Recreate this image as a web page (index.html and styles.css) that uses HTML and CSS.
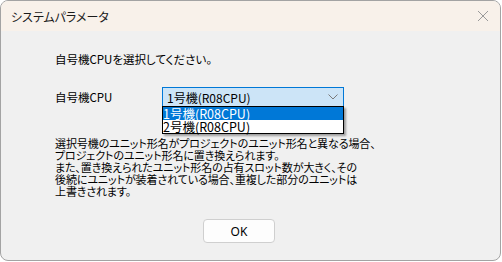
FILE: index.html
```html
<!DOCTYPE html>
<html lang="ja">
<head>
<meta charset="utf-8">
<link rel="stylesheet" href="styles.css">
</head>
<body>
<div class="dialog">
  <div class="titlebar">
    <span class="title">システムパラメータ</span>
    <svg class="close" width="12" height="12" viewBox="0 0 12 12"><path d="M1 1L11 11M11 1L1 11" stroke="#9a9a9a" stroke-width="1" fill="none"/></svg>
  </div>
  <div class="content">
    <p class="lead">自号機CPUを選択してください。</p>
    <div class="row">
      <span class="label">自号機CPU</span>
      <div class="combo-wrap">
        <div class="combo">
          <span>1号機(R08CPU)</span>
          <svg class="chev" width="10" height="6" viewBox="0 0 10 6"><path d="M0.5 0.5L5 5L9.5 0.5" stroke="#7a7a7a" stroke-width="1" fill="none"/></svg>
        </div>
        <ul class="list">
          <li class="sel">1号機(R08CPU)</li>
          <li>2号機(R08CPU)</li>
        </ul>
      </div>
    </div>
    <p class="note">選択号機のユニット形名がプロジェクトのユニット形名と異なる場合、<br>プロジェクトのユニット形名に置き換えられます。<br>また、置き換えられたユニット形名の占有スロット数が大きく、その<br>後続にユニットが装着されている場合、重複した部分のユニットは<br>上書きされます。</p>
    <div class="actions"><button class="ok">OK</button></div>
  </div>
</div>
</body>
</html>
```
FILE: styles.css
```css
html, body {
  margin: 0;
  padding: 0;
  background: #ffffff;
}
body {
  width: 502px;
  height: 262px;
  overflow: hidden;
  font-family: "Noto Sans CJK JP", "Noto Sans", sans-serif;
  font-size: 12px;
  color: #000;
}
.dialog {
  box-sizing: border-box;
  width: 501px;
  height: 261px;
  border: 1px solid #a3a3a3;
  border-radius: 8px;
  overflow: hidden;
  display: flex;
  flex-direction: column;
  background: #f0f0f0;
}
.titlebar {
  height: 30px;
  flex: none;
  background: #f8f1ea;
  display: flex;
  align-items: center;
  justify-content: space-between;
  padding: 0 11px 0 10px;
}
.title {
  font-size: 12px;
  font-feature-settings: "palt";
  color: #1a1a1a;
}
.content {
  flex: 1;
  padding: 20px 0 0 54px;
  font-feature-settings: "palt";
}
.lead {
  margin: 0;
  font-size: 11.5px;
  line-height: 16px;
}
.row {
  display: flex;
  align-items: center;
  margin-top: 20px;
}
.label {
  width: 107px;
  font-size: 11.5px;
}
.combo-wrap {
  position: relative;
  width: 182px;
}
.combo {
  box-sizing: border-box;
  height: 20px;
  border: 1px solid #0078d7;
  background: #cce4f7;
  display: flex;
  align-items: center;
  justify-content: space-between;
  padding: 0 5px 0 4px;
  font-size: 12px;
}
.list {
  position: absolute;
  left: 0;
  top: 19px;
  width: 182px;
  box-sizing: border-box;
  margin: 0;
  padding: 0;
  list-style: none;
  background: #fff;
  border: 1px solid #000;
  box-shadow: 2px 2px 2px rgba(0,0,0,0.35);
  font-size: 12.5px;
  line-height: 13px;
}
.list li {
  height: 13px;
}
.list li.sel {
  background: #0078d7;
  color: #fff;
}
.note {
  margin: 30px 0 0 0;
  font-size: 11px;
  line-height: 12px;
  letter-spacing: -0.1px;
}
.actions {
  margin: 22px 0 0 148px;
}
.ok {
  box-sizing: border-box;
  width: 72px;
  height: 24px;
  border: 1px solid #cfcfcf;
  border-radius: 4px;
  background: #fdfdfd;
  font-family: "Noto Sans", sans-serif;
  font-size: 12px;
  color: #000;
  padding: 0;
}
```
